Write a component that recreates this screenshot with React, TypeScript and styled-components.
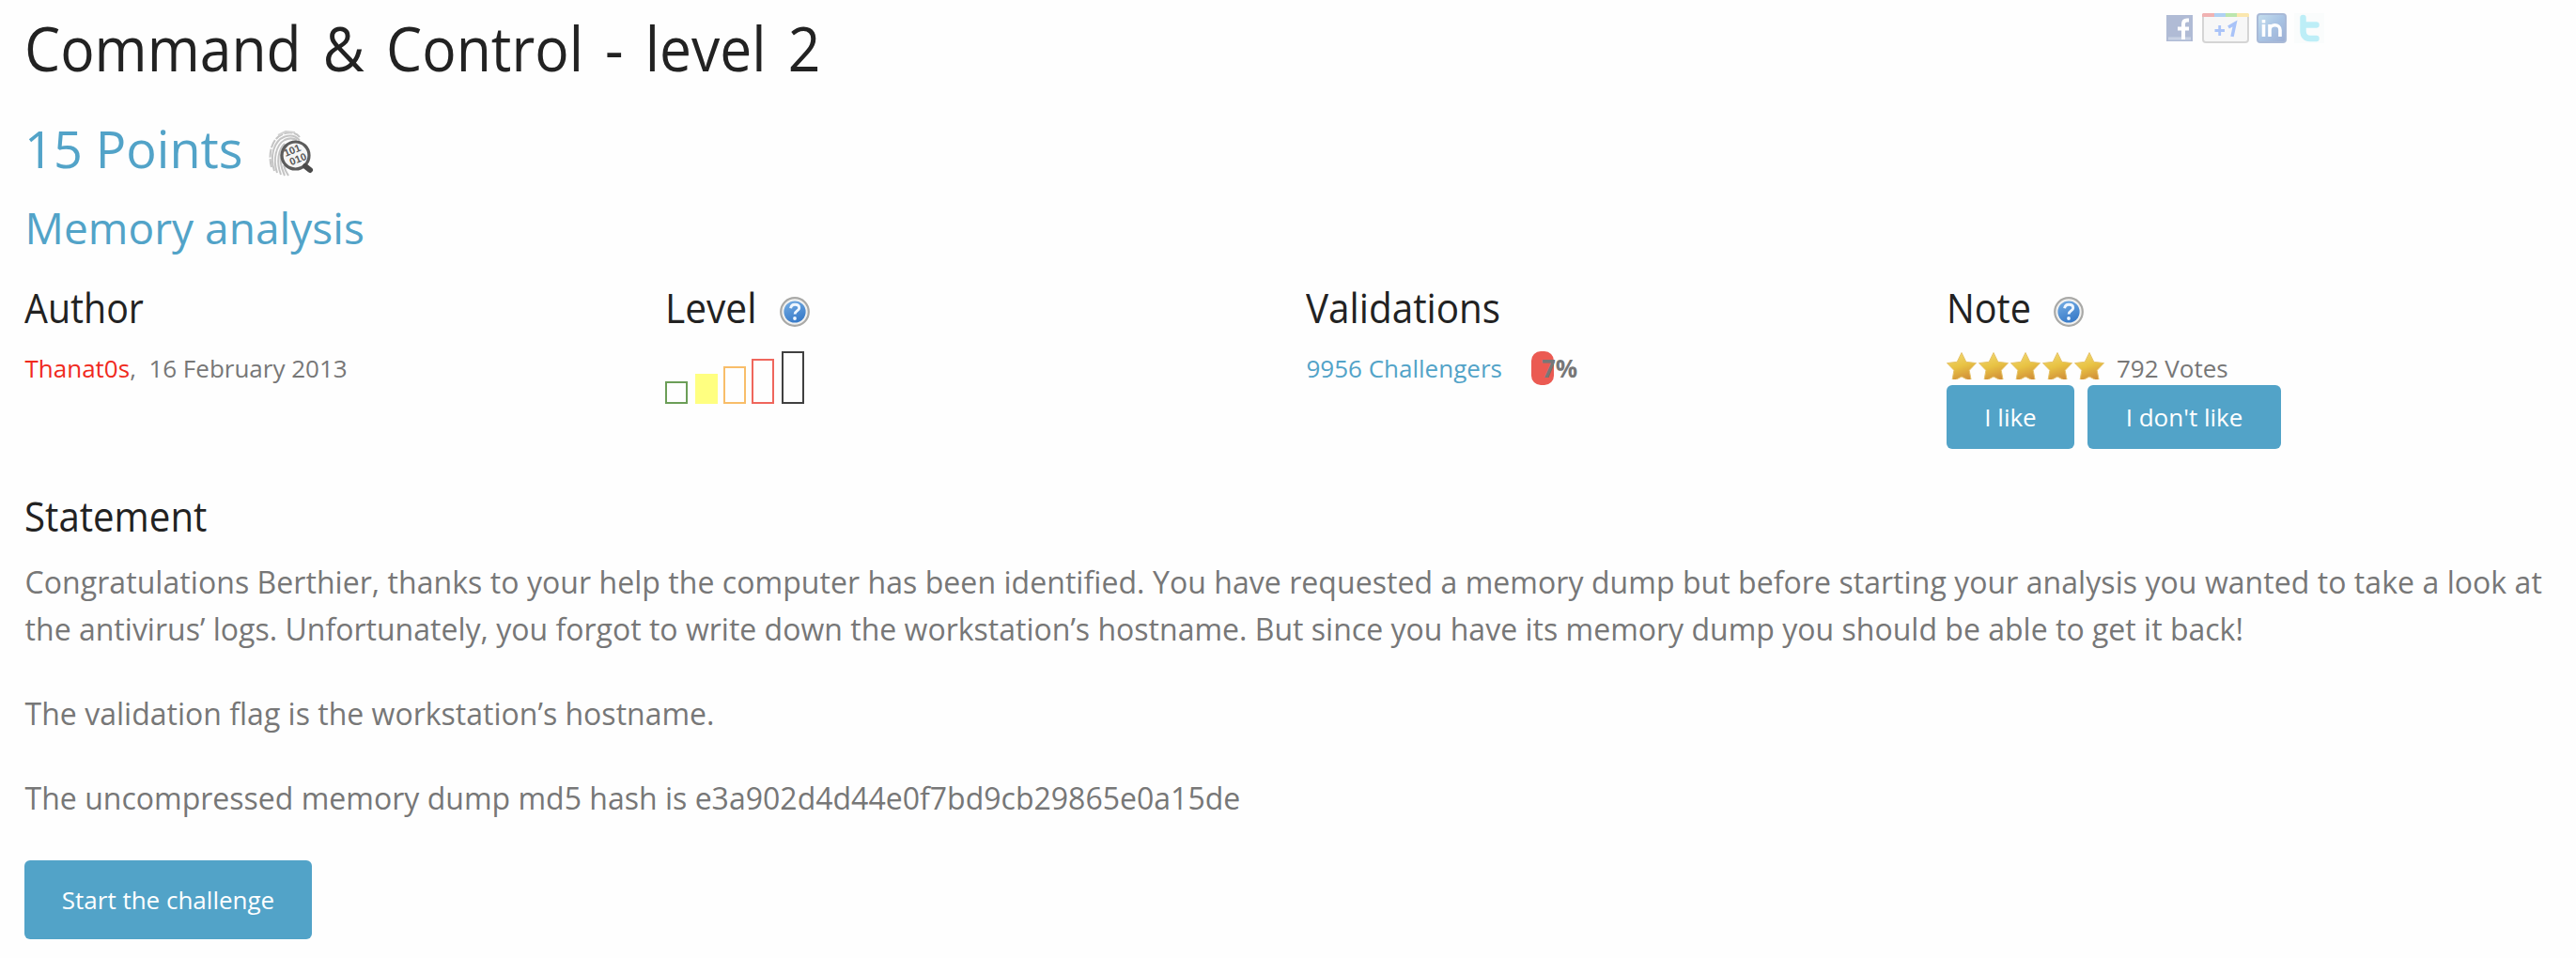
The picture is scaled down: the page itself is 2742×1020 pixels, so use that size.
import React from 'react';
import styled, { createGlobalStyle } from 'styled-components';

const LEVELS = [
  { color: '#6b9e57', height: 24, gap: 8, filled: false },
  { color: '#ffff80', height: 32, gap: 6, filled: true },
  { color: '#f8bd69', height: 40, gap: 6, filled: false },
  { color: '#ef665c', height: 48, gap: 8, filled: false },
  { color: '#404040', height: 56, gap: 0, filled: false },
];

const STARS = [1, 2, 3, 4, 5];

function HelpIcon() {
  return (
    <svg width='32' height='32' viewBox='0 0 32 32'>
      <defs>
        <linearGradient id='help-blue' x1='0' y1='0' x2='0.4' y2='1'>
          <stop offset='0' stopColor='#76aee4' />
          <stop offset='1' stopColor='#3b7dca' />
        </linearGradient>
      </defs>
      <circle cx='16' cy='16' r='14.8' fill='#f1f1f0' stroke='#a9a9a7' strokeWidth='2.2' />
      <circle cx='16' cy='16' r='11.6' fill='url(#help-blue)' />
      <path
        d='M11.6 12.2c.4-2.6 2.3-3.9 4.6-3.9 2.7 0 4.5 1.5 4.5 3.6 0 3.1-4.6 3-4.6 6.6'
        fill='none'
        stroke='#eef6ff'
        strokeWidth='2.9'
      />
      <circle cx='16' cy='23' r='1.9' fill='#eef6ff' />
    </svg>
  );
}

function ForensicIcon() {
  return (
    <svg width='48' height='50' viewBox='0 0 48 50'>
      <g fill='none' stroke='#c4c4c4' strokeWidth='2'>
        <path d='M3 39C-1 25 3 7 17 3c7-2 13 0 16 4' strokeDasharray='9 1.5' />
        <path d='M6 43C1 28 5 11 17 6.500c6-2 12-1 16 4' />
        <path d='M9 45C4 31 8 15 17 10c5-2.500 9-2 13 0' />
        <path d='M13 47C8 34 10 20 17 14' />
        <path d='M17 48c-4-9-6-18-3-26' />
        <path d='M21 48c-2-3-4-7-5-11' />
        <path d='M10 5l8-4 10 1' stroke='#d2d2d2' />
      </g>
      <circle cx='28.500' cy='26.500' r='14.500' fill='#f6f6f6' stroke='#5c5c5c' strokeWidth='3.200' />
      <path d='M39 38l5 4' stroke='#4a4a4a' strokeWidth='6' strokeLinecap='round' />
      <BitText transform='rotate(-22 18 27)' x='17.500' y='28'>101</BitText>
      <BitText transform='rotate(-22 25 37)' x='24' y='37'>010</BitText>
    </svg>
  );
}

// the artwork is cut flat at the bottom, just below the star's inner notch
function Star() {
  return (
    <svg width='34' height='30' viewBox='0 0 34 30'>
      <defs>
        <linearGradient id='star-gold' x1='0' y1='0' x2='0.3' y2='1'>
          <stop offset='0' stopColor='#f3dc78' />
          <stop offset='0.55' stopColor='#e8c243' />
          <stop offset='1' stopColor='#d2923a' />
        </linearGradient>
      </defs>
      <path
        d='M16 1.500l4.800 9.800 10.700 1.300-7.300 7.700 2.300 12.200L16 27 5.700 32.500l2.200-12.200L.5 12.600l10.700-1.300z'
        fill='url(#star-gold)'
        stroke='#e6c36b'
        strokeWidth='1'
        strokeLinejoin='round'
      />
    </svg>
  );
}

function ShareLinks() {
  return (
    <Share>
      <svg width='30' height='30' viewBox='0 0 30 30'>
        <rect x='1' y='1' width='28' height='28' fill='#b0bbd5' />
        <path d='M3 26h24' stroke='#c9d2e4' strokeWidth='3' />
        <path d='M25 6.500h-2c-3 0-4 1.500-4 4V27M13 15.500H25' fill='none' stroke='#fff' strokeWidth='4' />
      </svg>
      <svg width='50' height='32' viewBox='0 0 50 32'>
        <rect x='1' y='1' width='48' height='30' rx='3' fill='#f7f7f7' stroke='#d5d5d5' strokeWidth='2' />
        <path d='M1 0h12v4H0V1z' fill='#f0b2b2' />
        <path d='M13 0h12v4H13z' fill='#afd1f3' />
        <path d='M25 0h12v4H25z' fill='#bce6ae' />
        <path d='M37 0h12l1 1v3H37z' fill='#fbe7ae' />
        <path d='M13.500 18.500H24M18.700 13v11' stroke='#a9c3f8' strokeWidth='2.800' />
        <path d='M28 15l7-4-3 14' fill='none' stroke='#a9c3f8' strokeWidth='3.500' />
      </svg>
      <svg width='32' height='32' viewBox='0 0 32 32'>
        <defs>
          <linearGradient id='linkedin' x1='0' y1='0' x2='1' y2='1'>
            <stop offset='0' stopColor='#c5dfee' />
            <stop offset='0.5' stopColor='#a9c4e4' />
            <stop offset='1' stopColor='#9caed3' />
          </linearGradient>
        </defs>
        <rect x='1' y='1' width='30' height='30' rx='3' fill='url(#linkedin)' stroke='#a9bad7' strokeWidth='2' />
        <path d='M7.500 12v13M7.500 7v3.500M14 25V12M14 18c0-7 11-7 11 0v7' fill='none' stroke='#fff' strokeWidth='3.600' />
      </svg>
      <svg width='32' height='32' viewBox='0 0 32 32'>
        <rect width='32' height='32' fill='#fafcfc' />
        <path
          d='M9.500 5v14c0 5 2.500 8 7.500 8h6.500M9.500 12.500h14'
          fill='none'
          stroke='#bdeef7'
          strokeWidth='6.500'
          strokeLinecap='round'
        />
      </svg>
    </Share>
  );
}

function App() {
  return (
    <Page>
      <GlobalStyle />
      <Header>
        <Title>Command &amp; Control - level 2</Title>
        <ShareLinks />
      </Header>
      <Points>
        <span>15 Points</span>
        <ForensicIcon />
      </Points>
      <Subject>Memory analysis</Subject>

      <InfoGrid>
        <section>
          <Heading>
            <HeadingText $scale={0.915}>Author</HeadingText>
          </Heading>
          <Details>
            <Author href='#'>Thanat0s</Author>,&nbsp; 16 February 2013
          </Details>
        </section>
        <section>
          <Heading>
            <HeadingText $scale={0.945} $width={122}>
              Level
            </HeadingText>
            <HelpIcon />
          </Heading>
          <LevelBars>
            {LEVELS.map((level) => (
              <LevelBar
                key={level.height}
                $color={level.color}
                $height={level.height}
                $gap={level.gap}
                $filled={level.filled}
              />
            ))}
          </LevelBars>
        </section>
        <section>
          <Heading>
            <HeadingText $scale={0.94}>Validations</HeadingText>
          </Heading>
          <Details>
            <Challengers href='#'>9956 Challengers</Challengers>
            <Progress>
              <ProgressText>7%</ProgressText>
            </Progress>
          </Details>
        </section>
        <section>
          <Heading>
            <HeadingText $scale={0.92} $width={114}>
              Note
            </HeadingText>
            <HelpIcon />
          </Heading>
          <Details>
            <Rating>
              {STARS.map((star) => (
                <Star key={star} />
              ))}
            </Rating>
            792 Votes
          </Details>
          <Votes>
            <Button $width={136}>I like</Button>
            <Button $width={206}>I don't like</Button>
          </Votes>
        </section>
      </InfoGrid>

      <Heading>
        <HeadingText $scale={0.935}>Statement</HeadingText>
      </Heading>
      <Statement>
        <p>
          <FirstLine>
            Congratulations Berthier, thanks to your help the computer has been identified. You have requested a memory
            dump but before starting your analysis you wanted to take a look at
          </FirstLine>
          <br />
          the antivirus’ logs. Unfortunately, you forgot to write down the workstation’s hostname. But since you have
          its memory dump you should be able to get it back!
        </p>
        <p>The validation flag is the workstation’s hostname.</p>
        <p>The uncompressed memory dump md5 hash is e3a902d4d44e0f7bd9cb29865e0a15de</p>
      </Statement>
      <Button $width={306} $large>
        Start the challenge
      </Button>
    </Page>
  );
}

export default App;

const GlobalStyle = createGlobalStyle`
  * {
    box-sizing: border-box;
  }

  body {
    margin: 0;
    background: #fefefe;
    color: #777;
    font-family: 'Open Sans', 'Noto Sans', sans-serif;
    -webkit-font-smoothing: antialiased;
  }

  a {
    text-decoration: none;
  }

  svg {
    display: block;
    flex: none;
  }
`;

const Page = styled.main`
  width: 2742px;
  height: 1020px;
  padding: 6px 14px 0 26px;
  overflow: hidden;
`;

const Header = styled.header`
  display: flex;
  justify-content: space-between;
  height: 110px;
`;

/* headings are set slightly condensed, with wide word gaps */
const Title = styled.h1`
  margin: 0;
  color: #222;
  font-size: 65.5px;
  font-weight: 400;
  line-height: 89px;
  white-space: nowrap;
  word-spacing: 8px;
  transform: scaleX(0.925);
  transform-origin: left;
`;

const Share = styled.div`
  display: flex;
  align-items: center;
  gap: 8px;
  height: 32px;
  margin: 8px 254px 0 0;

  svg:nth-child(1) {
    margin-right: 1px;
  }
`;

const Points = styled.h2`
  display: flex;
  align-items: center;
  gap: 28px;
  height: 84px;
  margin: 0;
  color: #52a3c8;
  font-size: 54px;
  font-weight: 400;
  line-height: 83px;

  svg {
    margin-top: 12px;
  }
`;

const BitText = styled.text`
  fill: #5a5a5a;
  font-family: 'Liberation Sans', sans-serif;
  font-size: 11px;
  font-weight: 700;
`;

const Subject = styled.h3`
  height: 100px;
  margin: 0;
  padding-left: 0.5px;
  color: #52a3c8;
  font-size: 46px;
  font-weight: 400;
  letter-spacing: 0.05px;
  line-height: 84px;
`;

const InfoGrid = styled.div`
  display: grid;
  grid-template-columns: repeat(4, 682px);
  height: 222px;
  white-space: nowrap;
`;

const Heading = styled.h4`
  display: flex;
  align-items: center;
  height: 60px;
  margin: 0;
  padding-bottom: 5px;
  color: #222;
  font-size: 43px;
  font-weight: 400;
  line-height: 55px;

  svg {
    margin-top: 9px;
  }
`;

const HeadingText = styled.span<{ $scale: number; $width?: number }>`
  width: ${({ $width }) => ($width ? `${$width}px` : 'auto')};
  transform: scaleX(${({ $scale }) => $scale});
  transform-origin: left;
`;

const Details = styled.div`
  display: flex;
  align-items: center;
  height: 50px;
  padding-top: 14px;
  font-size: 26px;
  line-height: 36px;
  white-space: pre;
`;

const Author = styled.a`
  padding-left: 0.5px;
  color: #f02a1d;
`;

const Challengers = styled.a`
  width: 240px;
  padding-left: 0.5px;
  color: #52a3c8;
`;

const Progress = styled.div`
  width: 24px;
  height: 36px;
  border-radius: 10px;
  background: #eb5a52;
`;

const ProgressText = styled.strong`
  display: block;
  padding-left: 11px;
`;

const LevelBars = styled.div`
  display: flex;
  align-items: flex-end;
  height: 70px;
`;

const LevelBar = styled.div<{ $color: string; $height: number; $gap: number; $filled: boolean }>`
  width: 24px;
  height: ${({ $height }) => $height}px;
  margin-right: ${({ $gap }) => $gap}px;
  border: 2px solid ${({ $color }) => $color};
  background: ${({ $filled, $color }) => ($filled ? $color : 'transparent')};
`;

const Rating = styled.div`
  display: flex;
  margin: 0 11px 6px 0;
`;

const Votes = styled.div`
  display: flex;
  gap: 14px;
`;

const Button = styled.button<{ $width: number; $large?: boolean }>`
  width: ${({ $width }) => $width}px;
  height: ${({ $large }) => ($large ? 84 : 68)}px;
  padding: 0;
  border: none;
  border-radius: 6px;
  background: #52a3c8;
  color: #fff;
  font-family: inherit;
  font-size: 26px;
  white-space: nowrap;
`;

const Statement = styled.div`
  height: 334px;
  padding: 13px 0 0 0.6px;
  font-size: 32px;
  letter-spacing: 0.01px;
  line-height: 50px;
  white-space: nowrap;

  p {
    margin: 0 0 40px;
  }
`;

const FirstLine = styled.span`
  letter-spacing: 0.055px;
`;
